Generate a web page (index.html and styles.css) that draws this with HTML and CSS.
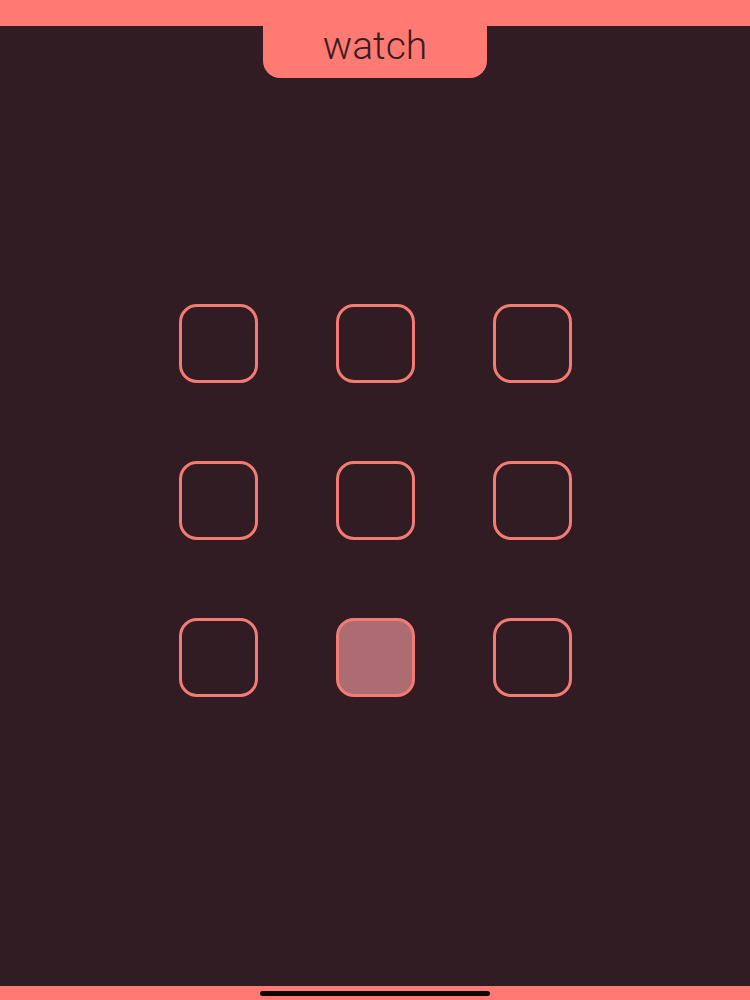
FILE: index.html
```html
<!DOCTYPE html>
<html>
<head>
<meta charset="utf-8">
<link rel="stylesheet" href="styles.css">
</head>
<body>
<div class="app">
  <header class="header">
    <div class="topbar"></div>
    <div class="tab">watch</div>
  </header>
  <main class="main">
    <div class="grid">
      <div class="cell"></div>
      <div class="cell"></div>
      <div class="cell"></div>
      <div class="cell"></div>
      <div class="cell"></div>
      <div class="cell"></div>
      <div class="cell"></div>
      <div class="cell active"></div>
      <div class="cell"></div>
    </div>
  </main>
  <footer class="footer"><div class="home"></div></footer>
</div>
</body>
</html>
```
FILE: styles.css
```css
html, body { margin: 0; padding: 0; }
body { background: #321c23; font-family: "Liberation Sans", Arial, sans-serif; }
.app { height: 1000px; display: flex; flex-direction: column; }
.header { display: flex; flex-direction: column; align-items: center; }
.topbar { height: 26px; width: 100%; background: #fe7a72; }
.tab {
  width: 224px;
  background: #fe7a72; border-radius: 0 0 17px 17px;
  display: flex; justify-content: center; align-items: flex-start;
  color: #3a1d22; font-family: Roboto, "Liberation Sans", sans-serif; font-weight: 300;
  font-size: 39px; line-height: 48px;
  margin-top: -4px; height: 56px;
  box-sizing: border-box;
}
.main { flex: 1; display: flex; justify-content: center; padding-top: 226px; }
.grid { display: grid; grid-template-columns: repeat(3, 79px); grid-auto-rows: 79px; gap: 78px; align-content: start; }
.cell { border: 3px solid #f27b73; border-radius: 18px; box-sizing: border-box; }
.cell.active { background: #ad6c72; }
.footer { height: 14px; background: #fe7a72; display: flex; justify-content: center; align-items: center; }
.home { width: 230px; height: 5px; border-radius: 3px; background: #0d0607; }
```
